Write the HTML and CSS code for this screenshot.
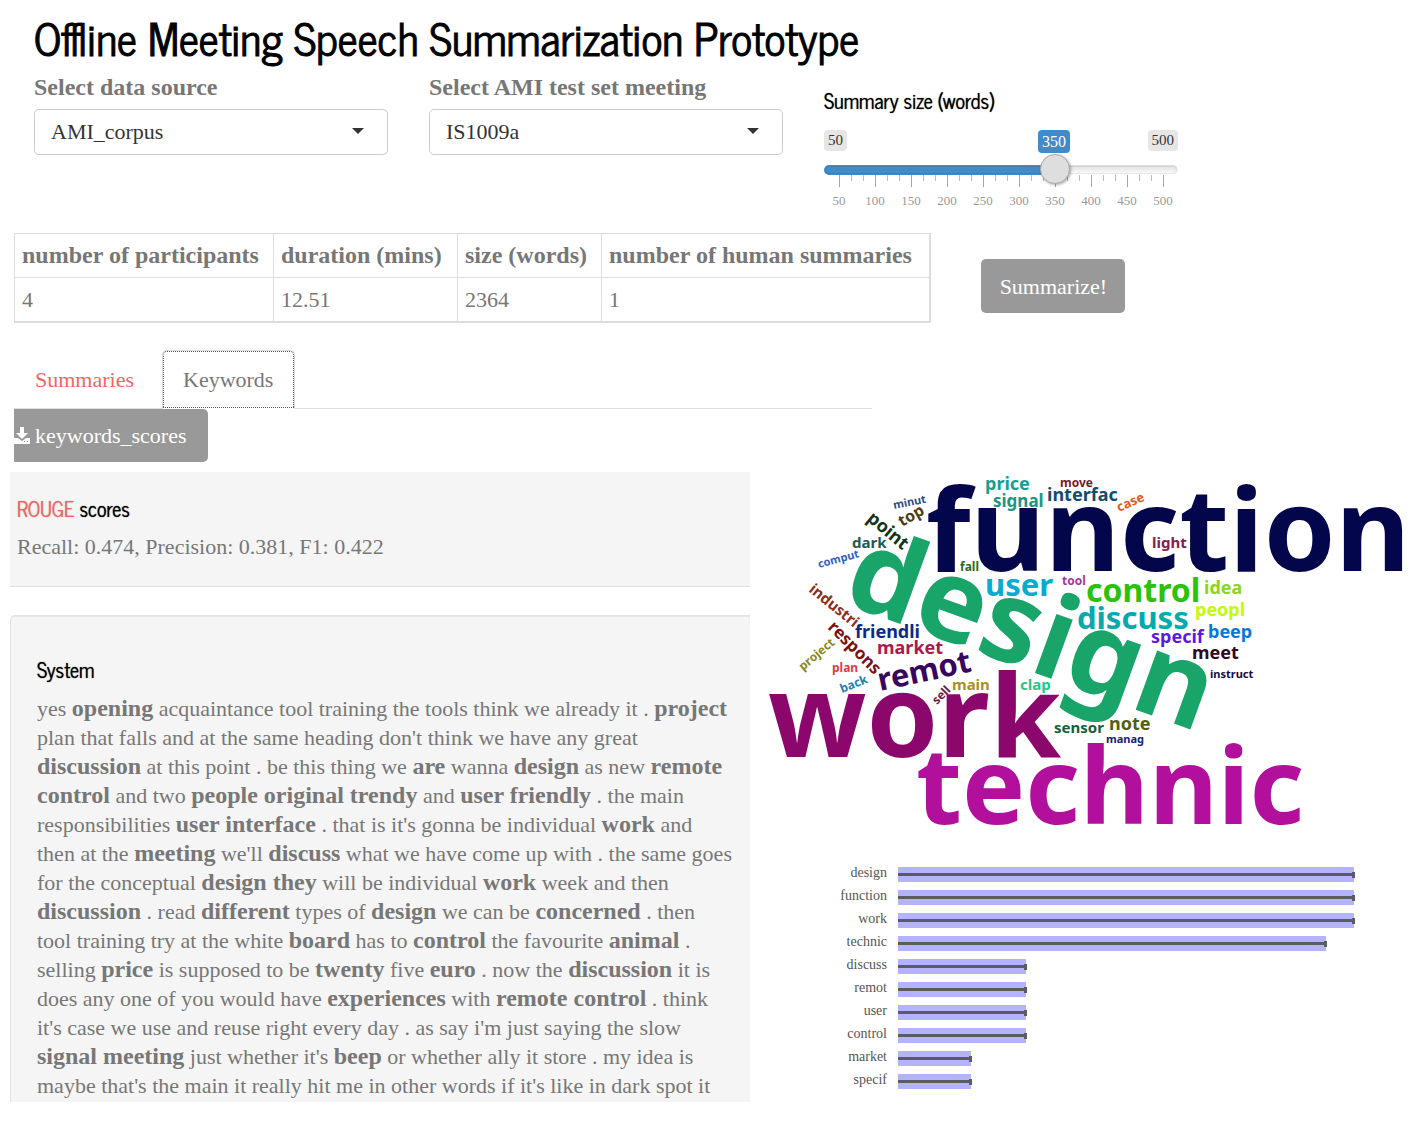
FILE: index.html
```html
<!DOCTYPE html>
<html lang="en">
<head>
<meta charset="utf-8">
<title>Offline Meeting Speech Summarization Prototype</title>
<link rel="stylesheet" href="styles.css">
</head>
<body>
<header class="page-head">
  <h1>Offline Meeting Speech Summarization Prototype</h1>
  <form class="controls">
    <div class="field">
      <label for="source">Select data source</label>
      <div class="select-box"><select id="source"><option>AMI_corpus</option></select></div>
    </div>
    <div class="field">
      <label for="meeting">Select AMI test set meeting</label>
      <div class="select-box"><select id="meeting"><option>IS1009a</option></select></div>
    </div>
    <div class="slider">
      <label class="sub-title" for="size">Summary size (words)</label>
      <div class="slider-marks">
        <span class="mark">50</span>
        <span class="mark">500</span>
        <output class="mark current" for="size">350</output>
      </div>
      <input type="range" id="size" min="50" max="500" value="350">
      <svg class="ticks" viewBox="0 0 354 12" preserveAspectRatio="none" aria-hidden="true">
        <path class="minor" d="M27.500 0v6M39.500 0v6M63.500 0v6M75.500 0v6M99.500 0v6M111.500 0v6M135.500 0v6M147.500 0v6M171.500 0v6M183.500 0v6M207.500 0v6M219.500 0v6M243.500 0v6M255.500 0v6M279.500 0v6M291.500 0v6M315.500 0v6M327.500 0v6"/>
        <path class="major" d="M15.500 0v12M51.500 0v12M87.500 0v12M123.500 0v12M159.500 0v12M195.500 0v12M231.500 0v12M267.500 0v12M303.500 0v12M339.500 0v12"/>
      </svg>
      <div class="tick-labels"><span>50</span><span>100</span><span>150</span><span>200</span><span>250</span><span>300</span><span>350</span><span>400</span><span>450</span><span>500</span></div>
    </div>
  </form>
</header>

<section class="info">
  <table class="stats">
    <colgroup><col class="c1"><col class="c2"><col class="c3"><col></colgroup>
    <thead><tr><th>number of participants</th><th>duration (mins)</th><th>size (words)</th><th>number of human summaries</th></tr></thead>
    <tbody><tr><td>4</td><td>12.51</td><td>2364</td><td>1</td></tr></tbody>
  </table>
  <button type="button" class="btn">Summarize!</button>
</section>

<nav class="tabs">
  <a href="#summaries">Summaries</a>
  <a href="#keywords" class="active">Keywords</a>
</nav>
<div class="download">
  <button type="button" class="btn">
    <svg width="16" height="18" viewBox="0 0 16 18" aria-hidden="true"><path fill="#fff" fill-rule="evenodd" d="M6 1h4v6h4l-6 6-6-6h4zM0 12h4l4 3 4-3h4v6H0zM10 15v1h1v-1zM13 15v1h1v-1z"/></svg>
    keywords_scores
  </button>
</div>

<main class="results">
  <div class="left">
    <section class="scores">
      <h2 class="sub-title"><a href="#rouge">ROUGE</a> scores</h2>
      <p>Recall: 0.474, Precision: 0.381, F1: 0.422</p>
    </section>
    <section class="system">
      <h2 class="sub-title">System</h2>
      <p>yes <b>opening</b> acquaintance tool training the tools think we already it . <b>project</b><br>
      plan that falls and at the same heading don't think we have any great<br>
      <b>discussion</b> at this point . be this thing we <b>are</b> wanna <b>design</b> as new <b>remote</b><br>
      <b>control</b> and two <b>people original trendy</b> and <b>user friendly</b> . the main<br>
      responsibilities <b>user interface</b> . that is it's gonna be individual <b>work</b> and<br>
      then at the <b>meeting</b> we'll <b>discuss</b> what we have come up with . the same goes<br>
      for the conceptual <b>design they</b> will be individual <b>work</b> week and then<br>
      <b>discussion</b> . read <b>different</b> types of <b>design</b> we can be <b>concerned</b> . then<br>
      tool training try at the white <b>board</b> has to <b>control</b> the favourite <b>animal</b> .<br>
      selling <b>price</b> is supposed to be <b>twenty</b> five <b>euro</b> . now the <b>discussion</b> it is<br>
      does any one of you would have <b>experiences</b> with <b>remote control</b> . think<br>
      it's case we use and reuse right every day . as say i'm just saying the slow<br>
      <b>signal meeting</b> just whether it's <b>beep</b> or whether ally it store . my idea is<br>
      maybe that's the main it really hit me in other words if it's like in dark spot it</p>
    </section>
  </div>
  <div class="right">
    <svg class="cloud" viewBox="760 471 650 381" role="img" aria-label="Keyword cloud">
      <g font-size="115">
        <text x="926" y="570" fill="#03064a">function</text>
        <text transform="translate(840 601) rotate(20)" fill="#19a469">design</text>
        <text x="768" y="756" fill="#8c076c">work</text>
      </g>
      <text x="916" y="823" font-size="106" fill="#b30f9d">technic</text>
      <g font-size="31">
        <text x="985" y="595" fill="#06abd2">user</text>
        <text x="1077" y="628" fill="#06a9ae">discuss</text>
        <text x="1086" y="601" font-size="32" fill="#2ac20a">control</text>
        <text transform="translate(880 690) rotate(-12)" fill="#37065f">remot</text>
      </g>
      <g font-size="18">
        <text x="985" y="489" fill="#169f93">price</text>
        <text x="993" y="506" font-size="17" fill="#1c9682">signal</text>
        <text x="1047" y="500" fill="#114c70">interfac</text>
        <text x="1204" y="593" fill="#8bd61c">idea</text>
        <text x="1195" y="615" fill="#c3fa09">peopl</text>
        <text x="1151" y="642" fill="#5b19e5">specif</text>
        <text x="1208" y="637" fill="#0878d8">beep</text>
        <text x="1192" y="658" fill="#310723">meet</text>
        <text x="855" y="637" fill="#0a2b87">friendli</text>
        <text x="877" y="653" fill="#aa1a4c">market</text>
        <text x="1109" y="729" fill="#535f10">note</text>
        <text transform="translate(866 519) rotate(40)" fill="#17350e">point</text>
        <text transform="translate(827 627) rotate(45)" font-size="17" fill="#7c1010">respons</text>
        <text transform="translate(902 526) rotate(-30)" font-size="16" fill="#4d3c12">top</text>
      </g>
      <g font-size="15">
        <text x="852" y="547" fill="#205a50">dark</text>
        <text x="1152" y="547" fill="#85204f">light</text>
        <text x="952" y="689" fill="#ab9021">main</text>
        <text x="1020" y="689" fill="#19ca8c">clap</text>
        <text x="1054" y="732" fill="#145e3a">sensor</text>
        <text transform="translate(808 590) rotate(39)" fill="#8e2e20">industri</text>
      </g>
      <g font-size="12">
        <text x="1060" y="486" fill="#781b1f">move</text>
        <text x="960" y="570" fill="#276c17">fall</text>
        <text x="1062" y="584" fill="#a6379d">tool</text>
        <text x="832" y="671" fill="#e23b46">plan</text>
        <text transform="translate(1119 511) rotate(-24)" font-size="13" fill="#dd5c1c">case</text>
        <text transform="translate(803 670) rotate(-40)" fill="#8b8722">project</text>
        <text transform="translate(842 692) rotate(-22)" fill="#247db4">back</text>
        <text transform="translate(937 704) rotate(-45)" fill="#671c42">sell</text>
      </g>
      <g font-size="11">
        <text transform="translate(894 508) rotate(-11)" fill="#2b4b87">minut</text>
        <text transform="translate(819 567) rotate(-15)" fill="#315fc4">comput</text>
        <text x="1210" y="677" fill="#150b4a">instruct</text>
        <text x="1106" y="742" fill="#182173">manag</text>
      </g>
    </svg>
    <div class="bars">
      <div class="bar-row"><span>design</span><div><i style="width:89%"></i></div></div>
      <div class="bar-row"><span>function</span><div><i style="width:89%"></i></div></div>
      <div class="bar-row"><span>work</span><div><i style="width:89%"></i></div></div>
      <div class="bar-row"><span>technic</span><div><i style="width:83.600%"></i></div></div>
      <div class="bar-row"><span>discuss</span><div><i style="width:25%"></i></div></div>
      <div class="bar-row"><span>remot</span><div><i style="width:25%"></i></div></div>
      <div class="bar-row"><span>user</span><div><i style="width:25%"></i></div></div>
      <div class="bar-row"><span>control</span><div><i style="width:25%"></i></div></div>
      <div class="bar-row"><span>market</span><div><i style="width:14.300%"></i></div></div>
      <div class="bar-row"><span>specif</span><div><i style="width:14.300%"></i></div></div>
    </div>
  </div>
</main>
</body>
</html>
```
FILE: styles.css
```css
* { box-sizing: border-box; }

body {
  margin: 0;
  background: #fff;
  color: #777;
  font: 22px/29px Georgia, "Liberation Serif", serif;
}

h1, h2, p { margin: 0; }
b, th, .field label { font-size: 24px; font-weight: 700; }
b { line-height: 24px; }

h1, .sub-title {
  color: #000;
  font-family: "News Cycle", "Liberation Sans Narrow", "Arial Narrow", "Liberation Sans", sans-serif;
}

h1 { font-size: 44px; line-height: 50px; font-weight: 400; -webkit-text-stroke: 1px #000; white-space: nowrap; }
.sub-title { display: block; font-size: 20px; line-height: 24px; font-weight: 400; text-shadow: 0 0 1px currentColor; }

a { color: #eb6864; text-decoration: none; }

/* header and inputs */
.page-head { padding: 12px 34px 0; }
.controls {
  display: grid;
  grid-template-columns: repeat(3, minmax(0, 354px));
  gap: 41px;
  padding-top: 10px;
}
.field label { display: block; line-height: 30px; margin-bottom: 7px; white-space: nowrap; }
.select-box { position: relative; }
.select-box::after {
  content: "";
  position: absolute;
  right: 24px;
  top: 19px;
  border: 6px solid transparent;
  border-top-color: #333;
  border-bottom: 0;
  pointer-events: none;
}
select {
  display: block;
  width: 100%;
  height: 46px;
  padding: 0 16px 2px;
  border: 1px solid #ccc;
  border-radius: 5px;
  background: #fff;
  color: #333;
  font: inherit;
  appearance: none;
}

.slider { padding-top: 17px; }
.slider-marks { position: relative; display: flex; justify-content: space-between; align-items: flex-start; margin-top: 17px; height: 25px; }
.mark { padding: 0 4px; border-radius: 4px; background: #e6e6e6; color: #333; font-size: 15px; line-height: 21px; }
.current {
  position: absolute;
  left: 65%;
  transform: translateX(-50%);
  background: #428bca;
  color: #fff;
  font-size: 16px;
  line-height: 23px;
}
input[type="range"] {
  display: block;
  width: 100%;
  height: 30px;
  margin: 0 0 -10px;
  background: none;
  appearance: none;
  position: relative;
}
input[type="range"]::-webkit-slider-runnable-track {
  height: 10px;
  border: 1px solid transparent;
  border-radius: 8px;
  background: linear-gradient(90deg, #428bca 65%, transparent 65%) border-box, linear-gradient(#ddd, #fff) border-box;
  box-shadow: inset 0 0 0 1px #0001;
}
input[type="range"]::-webkit-slider-thumb {
  appearance: none;
  width: 30px;
  height: 30px;
  margin-top: -12px;
  border: 1px solid #aaa;
  border-radius: 50%;
  background: #dedede;
  box-shadow: 1px 1px 3px #0005;
}
.ticks { display: block; width: 100%; height: 12px; }
.ticks path { fill: none; stroke-width: 1px; }
.ticks .minor { stroke: #bbb; }
.ticks .major { stroke: #7fb0dd; }
.tick-labels { display: grid; grid-template-columns: repeat(10, 1fr); margin: 4px -3px 0; color: #999; font-size: 13px; line-height: 20px; text-align: center; }

/* meeting facts */
.info { display: flex; align-items: center; gap: 50px; padding: 22px 14px 0; }
.stats { width: 66%; table-layout: fixed; border-collapse: collapse; border: 1px solid #ddd; border-width: 1px 2px 2px 1px; }
.stats .c1 { width: 259px; }
.stats .c2 { width: 184px; }
.stats .c3 { width: 144px; }
.stats th, .stats td { height: 44px; padding: 0 7px; border: 1px solid #ddd; text-align: left; white-space: nowrap; }
.stats tbody tr { border-bottom: 2px solid #ddd; }

.btn {
  min-width: 144px;
  height: 54px;
  padding: 0 17px;
  border: 0;
  border-radius: 5px;
  background: #999;
  color: #fff;
  font: inherit;
  white-space: nowrap;
}
.info .btn { margin-top: 17px; }

/* tabs */
.tabs { display: flex; gap: 2px; max-width: 858px; margin: 27px 0 0 14px; border-bottom: 1px solid #ddd; }
.tabs a { min-width: 133px; padding: 14px 20px; border: 1px solid transparent; border-bottom: 0; }
.tabs a:first-child { min-width: 146px; }
.tabs .active {
  margin-bottom: -1px;
  border-color: #ddd;
  border-radius: 5px 5px 0 0;
  background: #fff;
  color: #777;
  outline: 1px dotted #555;
  outline-offset: -2px;
}
.download { margin-left: 14px; overflow: hidden; }
.download .btn { display: flex; align-items: center; gap: 5px; min-width: 211px; margin-left: -17px; height: 53px; }

/* results */
.results { display: grid; grid-template-columns: 740px 1fr; gap: 10px; padding: 10px 8px 22px 10px; }
.left { overflow: hidden; }
.left p { white-space: nowrap; }
.scores { padding: 25px 7px; height: 115px; background: #f5f5f5; border-bottom: 1px solid #ddd; }
.scores p { margin-top: 11px; }
.system {
  margin-top: 28px;
  padding: 42px 0 0 26px;
  height: 487px;
  overflow: hidden;
  background: #f5f5f5;
  border: 1px solid #e3e3e3;
  border-width: 1px 0 0 1px;
  border-radius: 5px 0 0 0;
  box-shadow: inset 0 1px 1px #0001;
}
.system p { margin-top: 12px; }

.right { min-width: 0; }
.cloud { display: block; width: 100%; }
.cloud text { font-family: "Noto Sans", "Open Sans", sans-serif; font-weight: 700; }

.bars { padding-top: 10px; }
.bar-row { display: flex; gap: 11px; height: 23px; }
.bar-row span { flex: 0 0 127px; font-size: 14px; line-height: 19px; color: #555; text-align: right; }
.bar-row div { flex: 1; padding-top: 4px; }
.bar-row i { position: relative; display: block; height: 15px; background: linear-gradient(transparent 6px, #5c5c60 6px, #5c5c60 9px, transparent 9px) #b3b3ff; }
.bar-row i::after { content: ""; position: absolute; right: -1px; top: 5px; width: 3px; height: 6px; background: #5c5c60; }
```
